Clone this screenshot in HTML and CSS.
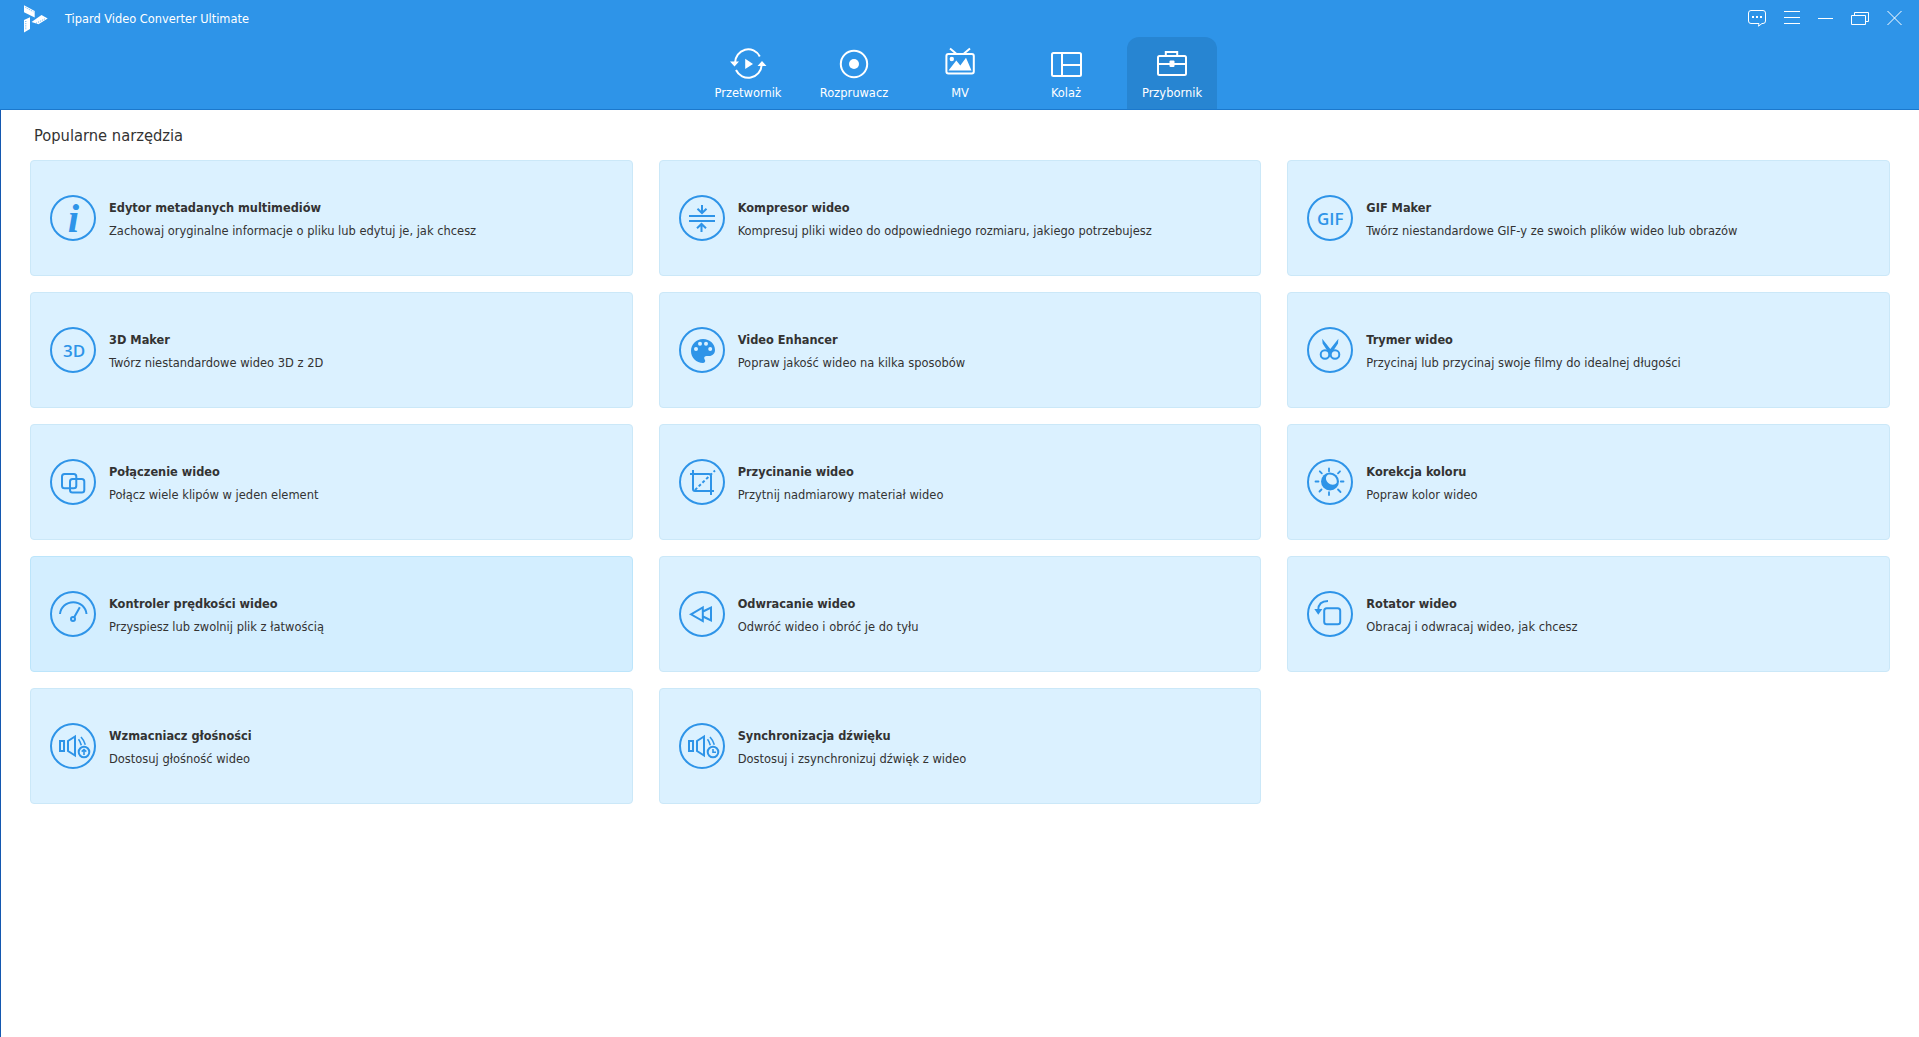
FILE: index.html
```html
<!DOCTYPE html>
<html lang="pl">
<head>
    <meta charset="UTF-8">
    <meta name="viewport" content="width=device-width, initial-scale=1.0">
    <title>Tipard Video Converter Ultimate</title>
    <link rel="stylesheet" href="styles.css">
</head>
<body>
    <header class="header">
        <div class="titlebar">
            <svg class="logo" width="24" height="28" viewBox="0 0 24 28">
                <path class="solid" d="M0 0.3L10.7 6V12.5L0 7.2Z"/>
                <path class="solid" d="M0 15L6 12.2V24L0 27.5Z"/>
                <path class="solid" d="M7.5 17L17.5 10L23.7 13.6L14.5 19.3Z"/>
                <path class="holes" d="M1.5 2.4L9.5 6.8M1.8 16V25M12 18.3L21 13.8"/>
            </svg>
            <span class="app-title">Tipard Video Converter Ultimate</span>
            <div class="window-buttons">
                <svg width="18" height="17" viewBox="0 0 18 17">
                    <path class="thin" d="M10.5 16.2L11 13.5H3Q0.5 13.5 0.5 11V3Q0.5 0.5 3 0.5H15Q17.5 0.5 17.5 3V11Q17.5 13.5 15 13.5H14Z"/>
                    <path class="solid" d="M4 6h2v2H4zM8 6h2v2H8zM12 6h2v2h-2z"/>
                </svg>
                <svg width="16" height="17" viewBox="0 0 16 17"><path class="thin" d="M0 1.5H16M0 7.5H16M0 13.5H16"/></svg>
                <svg width="15" height="17" viewBox="0 0 15 17"><path class="thin" d="M0 8.5H15"/></svg>
                <svg width="18" height="17" viewBox="0 0 18 17"><path class="thin" d="M0.5 5.5H14.5V14.5H0.5ZM3.5 5.5V2.5H17.5V11.5H14.5"/></svg>
                <svg width="15" height="17" viewBox="0 0 15 17"><path class="thin" d="M0.5 1L14.5 15M14.5 1L0.5 15"/></svg>
            </div>
        </div>
        <nav class="tabs">
            <a class="tab">
                <svg width="40" height="36" viewBox="0 0 40 36">
                    <path class="line" d="M7 18A13.2 13.8 0 0 1 31.8 11.5M33.7 20A13.5 13.5 0 0 1 8 25"/>
                    <path class="solid" d="M2 16.5H11L6.5 21.5ZM29.5 21H38.5L34 16ZM17.2 13.8L25 19L17.2 24Z"/>
                </svg>
                <span>Przetwornik</span>
            </a>
            <a class="tab">
                <svg width="40" height="36" viewBox="0 0 40 36">
                    <circle class="line" cx="20" cy="19" r="13.2"/>
                    <circle class="solid" cx="20" cy="19" r="5"/>
                </svg>
                <span>Rozpruwacz</span>
            </a>
            <a class="tab">
                <svg width="40" height="36" viewBox="0 0 40 36">
                    <rect class="line" x="6.4" y="9" width="27.4" height="19.5" rx="2"/>
                    <path class="line" d="M10 3.5L16 8.5M30 3.5L24 8.5"/>
                    <circle class="solid" cx="11.8" cy="14" r="2.2"/>
                    <path class="solid" d="M8.5 25.5L16.3 15.5L20.3 20.5L26 12.8L31.5 25.5Z"/>
                </svg>
                <span>MV</span>
            </a>
            <a class="tab">
                <svg width="40" height="36" viewBox="0 0 40 36">
                    <rect class="line" x="6" y="8" width="29" height="23" rx="1.5"/>
                    <path class="line" d="M16 8V31M16 20H35"/>
                </svg>
                <span>Kolaż</span>
            </a>
            <a class="tab active">
                <svg width="40" height="36" viewBox="0 0 40 36">
                    <rect class="line" x="6" y="11" width="28" height="19" rx="1.5"/>
                    <path class="line" d="M13.8 10.5V7H25.2V10.5M6 19H34"/>
                    <rect class="solid" x="17.5" y="15.5" width="5" height="6.5" rx="1"/>
                </svg>
                <span>Przybornik</span>
            </a>
        </nav>
    </header>

    <main class="content">
        <h1>Popularne narzędzia</h1>
        <div class="tools">
            <div class="tool">
                <svg class="icon" viewBox="0 0 46 46">
                    <circle cx="23" cy="23" r="22"/>
                    <text class="letter-i" x="23.5" y="37.2">i</text>
                </svg>
                <div class="info">
                    <h2>Edytor metadanych multimediów</h2>
                    <p>Zachowaj oryginalne informacje o pliku lub edytuj je, jak chcesz</p>
                </div>
            </div>
            <div class="tool">
                <svg class="icon" viewBox="0 0 46 46">
                    <circle cx="23" cy="23" r="22"/>
                    <path d="M10 21H36M10 26H36M23 10V18M18.5 13.7L23 18L27.5 13.7M22.5 37V29M18 33.3L22.5 29L27 33.3"/>
                </svg>
                <div class="info">
                    <h2>Kompresor wideo</h2>
                    <p>Kompresuj pliki wideo do odpowiedniego rozmiaru, jakiego potrzebujesz</p>
                </div>
            </div>
            <div class="tool">
                <svg class="icon" viewBox="0 0 46 46">
                    <circle cx="23" cy="23" r="22"/>
                    <text x="23.2" y="30.3">GIF</text>
                </svg>
                <div class="info">
                    <h2>GIF Maker</h2>
                    <p>Twórz niestandardowe GIF-y ze swoich plików wideo lub obrazów</p>
                </div>
            </div>
            <div class="tool">
                <svg class="icon" viewBox="0 0 46 46">
                    <circle cx="23" cy="23" r="22"/>
                    <text x="24" y="30.3">3D</text>
                </svg>
                <div class="info">
                    <h2>3D Maker</h2>
                    <p>Twórz niestandardowe wideo 3D z 2D</p>
                </div>
            </div>
            <div class="tool">
                <svg class="icon" viewBox="0 0 46 46">
                    <circle cx="23" cy="23" r="22"/>
                    <path class="fill" d="M24 12C17.4 12 12 17.4 12 24S17.4 36 24 36C25.5 36 26.3 35 26.2 33.8C26.1 32.7 25.2 32.2 25.2 31C25.2 29.7 26.2 29 27.5 29H30C33.5 29 36 26.5 36 23C36 17 31 12 24 12Z"/>
                    <g class="hole">
                        <circle cx="21" cy="16.7" r="2"/>
                        <circle cx="27" cy="16.7" r="2"/>
                        <circle cx="17" cy="22" r="2"/>
                        <circle cx="31.2" cy="22" r="2"/>
                    </g>
                </svg>
                <div class="info">
                    <h2>Video Enhancer</h2>
                    <p>Popraw jakość wideo na kilka sposobów</p>
                </div>
            </div>
            <div class="tool">
                <svg class="icon" viewBox="0 0 46 46">
                    <circle cx="23" cy="23" r="22"/>
                    <circle cx="18" cy="27.5" r="4.3"/>
                    <circle cx="28" cy="27.5" r="4.3"/>
                    <path class="fill" d="M15.2 11.8L23.3 22L31.4 11.8L31 16.5L24.5 26.5H22L15.6 16.5Z"/>
                </svg>
                <div class="info">
                    <h2>Trymer wideo</h2>
                    <p>Przycinaj lub przycinaj swoje filmy do idealnej długości</p>
                </div>
            </div>
            <div class="tool">
                <svg class="icon" viewBox="0 0 46 46">
                    <circle cx="23" cy="23" r="22"/>
                    <rect x="12" y="15" width="14.3" height="14.3" rx="2.5"/>
                    <rect x="20" y="20" width="14.3" height="13.6" rx="2.5"/>
                </svg>
                <div class="info">
                    <h2>Połączenie wideo</h2>
                    <p>Połącz wiele klipów w jeden element</p>
                </div>
            </div>
            <div class="tool">
                <svg class="icon" viewBox="0 0 46 46">
                    <circle cx="23" cy="23" r="22"/>
                    <path d="M11 15H30Q32 15 32 17V36M14 11V30Q14 32 16 32H35"/>
                    <path class="dash" d="M16 31L36 11.5"/>
                </svg>
                <div class="info">
                    <h2>Przycinanie wideo</h2>
                    <p>Przytnij nadmiarowy materiał wideo</p>
                </div>
            </div>
            <div class="tool">
                <svg class="icon" viewBox="0 0 46 46">
                    <circle cx="23" cy="23" r="22"/>
                    <circle class="fill" cx="23" cy="22.5" r="9"/>
                    <path class="hole" d="M21 15.8C24.5 14.5 30.2 17.5 29.8 23.5C28 26.8 23.3 26 21 23.8C18.6 21.5 18 17.8 21 15.8Z"/>
                    <path class="rays" d="M22 9.5V12.3M22 33.2V36M8.5 22.5H11.5M33.8 22.5H36.5M12.8 12.3L14.8 14.3M31 14.3L33 12.3M12.5 32.5L14.5 30.5M31 30.5L33.5 33"/>
                </svg>
                <div class="info">
                    <h2>Korekcja koloru</h2>
                    <p>Popraw kolor wideo</p>
                </div>
            </div>
            <div class="tool hover">
                <svg class="icon" viewBox="0 0 46 46">
                    <circle cx="23" cy="23" r="22"/>
                    <path d="M10 23A13.3 13 0 0 1 36.5 23M24.2 26.3L29.8 16.3"/>
                    <circle cx="23" cy="28" r="2"/>
                </svg>
                <div class="info">
                    <h2>Kontroler prędkości wideo</h2>
                    <p>Przyspiesz lub zwolnij plik z łatwością</p>
                </div>
            </div>
            <div class="tool">
                <svg class="icon" viewBox="0 0 46 46">
                    <circle cx="23" cy="23" r="22"/>
                    <path d="M12 23.3L23.8 16.5V30ZM24 20.5L32 16.5V29.5L24 25.5"/>
                </svg>
                <div class="info">
                    <h2>Odwracanie wideo</h2>
                    <p>Odwróć wideo i obróć je do tyłu</p>
                </div>
            </div>
            <div class="tool">
                <svg class="icon" viewBox="0 0 46 46">
                    <circle cx="23" cy="23" r="22"/>
                    <rect x="17.2" y="17.2" width="16" height="16" rx="2.5"/>
                    <path d="M21 10C15 10 11.3 13 11.3 19"/>
                    <path class="fill" d="M7.3 18H15.3L11.3 23.7Z"/>
                </svg>
                <div class="info">
                    <h2>Rotator wideo</h2>
                    <p>Obracaj i odwracaj wideo, jak chcesz</p>
                </div>
            </div>
            <div class="tool">
                <svg class="icon" viewBox="0 0 46 46">
                    <circle cx="23" cy="23" r="22"/>
                    <path d="M10 18H14V28H10ZM25 13.5V32.5L18 28V18Z"/>
                    <path class="waves" d="M28.5 16.3Q30 18 31.3 22.3M31 14Q33.5 16.5 35.3 21.7"/>
                    <circle cx="34" cy="29" r="5.3"/>
                    <path class="waves" d="M34 32V26.8M31.7 28.7L34 26.5L36.3 28.7"/>
                </svg>
                <div class="info">
                    <h2>Wzmacniacz głośności</h2>
                    <p>Dostosuj głośność wideo</p>
                </div>
            </div>
            <div class="tool">
                <svg class="icon" viewBox="0 0 46 46">
                    <circle cx="23" cy="23" r="22"/>
                    <path d="M10 18H14V28H10ZM25 13.5V32.5L18 28V18Z"/>
                    <path class="waves" d="M28.5 16.3Q30 18 31.3 22.3M31 14Q33.5 16.5 35.3 21.7"/>
                    <circle cx="34" cy="29" r="5.3"/>
                    <path class="waves" d="M34 26V29.3H37"/>
                </svg>
                <div class="info">
                    <h2>Synchronizacja dźwięku</h2>
                    <p>Dostosuj i zsynchronizuj dźwięk z wideo</p>
                </div>
            </div>
        </div>
    </main>
</body>
</html>
```

FILE: styles.css
```css
* {
    box-sizing: border-box;
}
body {
    margin: 0;
    height: 100vh;
    display: flex;
    flex-direction: column;
    background-color: #fff;
    color: #333;
    font-family: "DejaVu Sans Condensed", "DejaVu Sans", sans-serif;
    font-size: 12.76px;
    overflow: hidden;
}
.header {
    height: 110px;
    flex: none;
    background-color: #2e94e8;
    border-bottom: 1px solid #1b78cc;
    color: #fff;
}
.titlebar {
    height: 37px;
    padding: 0 17px 0 24px;
    display: flex;
    align-items: center;
}
.logo {
    margin-right: 17px;
}
.app-title {
    margin-bottom: 1px;
    font-size: 12.68px;
}
.window-buttons {
    margin-left: auto;
    display: flex;
    gap: 18px;
}
.tabs {
    display: flex;
    justify-content: center;
    gap: 16px;
    padding-left: 1px;
}
.tab {
    width: 90px;
    height: 72px;
    padding-top: 8px;
    display: flex;
    flex-direction: column;
    align-items: center;
    gap: 2px;
    border-radius: 12px 12px 0 0;
    line-height: 20px;
}
.tab.active {
    background-color: #2785d2;
}
.line {
    fill: none;
    stroke: #fff;
    stroke-width: 2;
}
.thin {
    fill: none;
    stroke: #fff;
    stroke-width: 1;
}
.solid {
    fill: #fff;
}
.holes {
    fill: none;
    stroke: #2e94e8;
    stroke-width: 0.8;
    stroke-dasharray: 1 1.2;
}
.content {
    flex: 1;
    padding: 14px 29px 0;
    border-left: 1px solid #1458b0;
}
h1 {
    margin: 0 0 13px 4px;
    font-size: 16.35px;
    font-weight: normal;
    line-height: 23px;
}
.tools {
    display: grid;
    grid-template-columns: repeat(3, 1fr);
    gap: 16px 26px;
}
.tool {
    height: 116px;
    padding-left: 19px;
    display: flex;
    align-items: center;
    gap: 13px;
    background-color: #dbf1ff;
    border: 1px solid #cbe8f8;
    border-radius: 4px;
}
.tool.hover {
    background-color: #d3eeff;
    border-color: #bce5fb;
}
.info {
    padding-top: 2px;
}
.info h2 {
    margin: 0;
    font-size: 12.65px;
    line-height: 23px;
}
.info p {
    margin: 0;
    line-height: 23px;
}
.icon {
    width: 46px;
    height: 46px;
    fill: none;
    stroke: #2e94e8;
    stroke-width: 2;
}
.icon text {
    fill: #2e94e8;
    stroke: none;
    font-family: "Open Sans", sans-serif;
    font-size: 17px;
    font-weight: 600;
    text-anchor: middle;
}
.icon .letter-i {
    font-family: "Liberation Serif", serif;
    font-size: 41px;
    font-style: italic;
    font-weight: bold;
}
.icon .fill {
    fill: #2e94e8;
    stroke: none;
}
.icon .hole {
    fill: #dbf1ff;
    stroke: none;
}
.icon .rays {
    stroke-width: 1.8;
    stroke-linecap: round;
}
.icon .waves {
    stroke-width: 1.6;
}
.icon .dash {
    stroke-dasharray: 3 2.2;
}
```
